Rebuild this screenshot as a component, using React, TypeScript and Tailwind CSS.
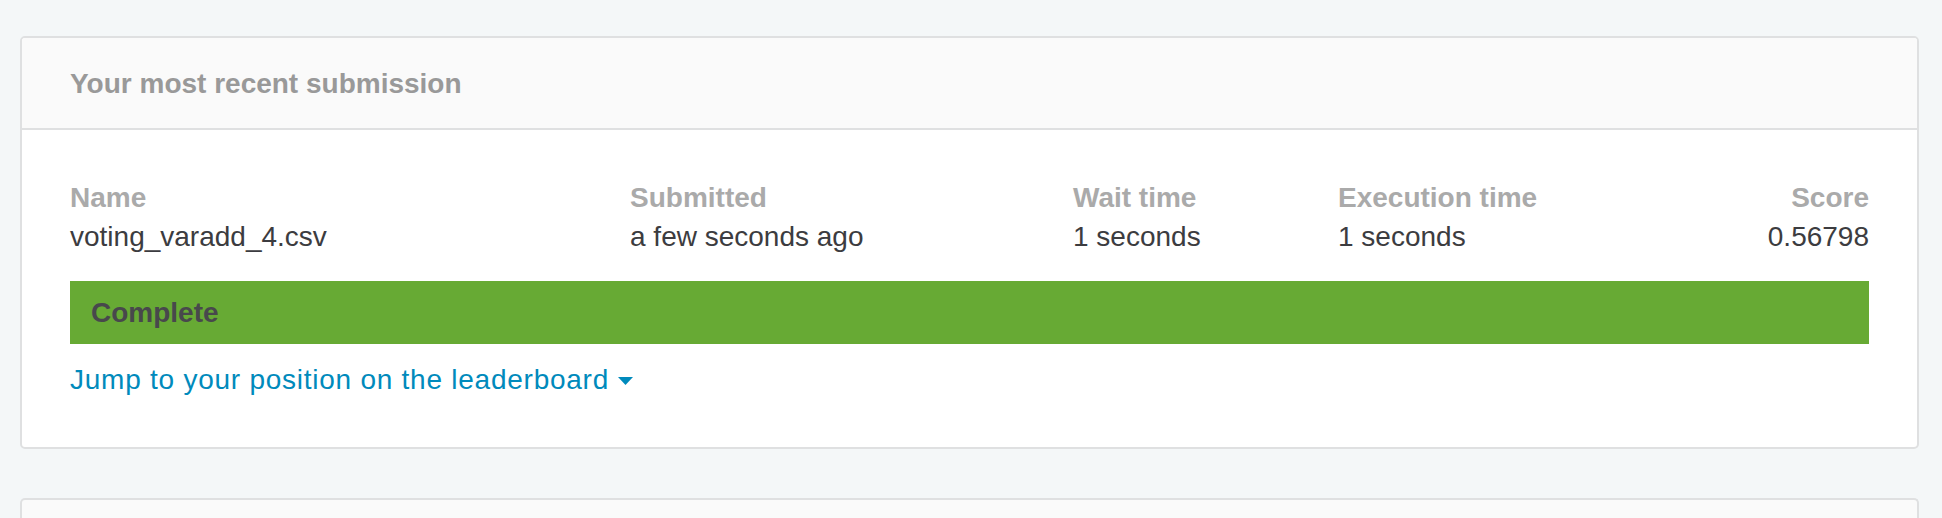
export default function App() {
  const cols = [
    { label: 'Name', value: 'voting_varadd_4.csv', align: 'text-left' },
    { label: 'Submitted', value: 'a few seconds ago', align: 'text-left' },
    { label: 'Wait time', value: '1 seconds', align: 'text-left' },
    { label: 'Execution time', value: '1 seconds', align: 'text-left' },
    { label: 'Score', value: '0.56798', align: 'text-right' },
  ];

  return (
    <div
      className="min-h-screen bg-[#f4f7f8] pt-[36px] pl-[20px] pr-[23px] text-[28px] leading-[39px]"
      style={{ fontFamily: '"Liberation Sans", Arial, sans-serif' }}
    >
      {/* Submission card */}
      <div className="rounded-[5px] border-2 border-[#dfe0e1] bg-white overflow-hidden">
        <div className="h-[92px] flex items-center pl-[48px] bg-[#fafafa] border-b-2 border-[#dfe0e1]">
          <h2 className="font-bold text-[#999999]">Your most recent submission</h2>
        </div>

        <div className="px-[48px] pt-[48px] pb-[48px]">
          <div className="grid grid-cols-[560px_443px_265px_1fr_auto]">
            {cols.map((c) => (
              <div key={c.label} className={c.align}>
                <div className="font-bold text-[#aaaaaa]">{c.label}</div>
                <div className="text-[#3c3c40]">{c.value}</div>
              </div>
            ))}
          </div>

          <div className="mt-[25px] h-[63px] bg-[#67aa34] flex items-center pl-[21px]">
            <span className="font-bold text-[#48484c]">Complete</span>
          </div>

          <a href="#" className="mt-[16px] inline-flex items-center text-[#008abc] tracking-[0.75px]">
            Jump to your position on the leaderboard
            <svg className="ml-[9px] mt-[2px]" width="15" height="8" viewBox="0 0 15 8">
              <path d="M0 0 H15 L7.5 8 Z" fill="#008abc" />
            </svg>
          </a>
        </div>
      </div>

      {/* Next card (cut off) */}
      <div className="mt-[49px] h-[40px] rounded-t-[5px] border-2 border-b-0 border-[#dfe0e1] bg-[#fafafa]" />
    </div>
  );
}
